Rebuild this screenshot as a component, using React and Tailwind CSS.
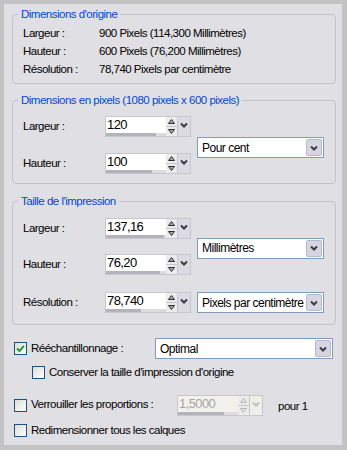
import React from "react";

const FONT = "font-['Liberation_Sans',Arial,sans-serif]";

// small dark "v" used by every drop-down arrow
const Chevron = ({ color = "#3c3c3c" }) => (
  <svg width="8" height="6" viewBox="0 0 8 6">
    <path d="M1 1.5 L4 4.5 L7 1.5" fill="none" stroke={color} strokeWidth="2" />
  </svg>
);

const Tri = ({ up, disabled }) => (
  <svg width="7" height="5" viewBox="0 0 7 5">
    <path
      d={up ? "M0.5 4.5 L3.5 0.5 L6.5 4.5 Z" : "M0.5 0.5 L3.5 4.5 L6.5 0.5 Z"}
      fill={disabled ? "#e4e4e0" : "#a8a8b0"}
      stroke={disabled ? "#b8b8b0" : "#2e2e2e"}
      strokeWidth="1"
    />
  </svg>
);

// numeric field with the slider bar, spin buttons and arrow
const SpinField = ({ value, bar, disabled }) => (
  <div className="flex w-[86px] h-[21px] border border-[#c6c6cc]">
    <div className={`flex flex-col w-[61px] ${disabled ? "bg-[#f2f1ec]" : "bg-white"}`}>
      <div
        className={`flex-1 pl-[1px] text-[13px] tracking-[-0.6px] leading-[16px] ${
          disabled ? "text-[#a6a6a6]" : "text-black"
        }`}
      >
        {value}
      </div>
      <div className="h-[4px] bg-[#dcdce0]">
        <div className="h-full bg-[#b3b3bb]" style={{ width: bar }} />
      </div>
    </div>
    <div className="flex flex-col w-[11px]">
      <div className="flex-1 flex items-center justify-center bg-[#ecebee] border-b border-[#c6c6cc]">
        <Tri up disabled={disabled} />
      </div>
      <div className="flex-1 flex items-center justify-center bg-[#ecebee]">
        <Tri disabled={disabled} />
      </div>
    </div>
    <div
      className={`flex items-start justify-center pt-[5px] w-[13px] border-l border-[#c6c6cc] ${
        disabled ? "bg-[#efeee9]" : "bg-[#dcdbe4]"
      }`}
    >
      <Chevron color={disabled ? "#c2c2bc" : "#3c3c3c"} />
    </div>
  </div>
);

const Select = ({ text, w = "w-[127px]", className = "" }) => (
  <div className={`flex items-center ${w} h-[21px] border border-[#7f9db9] bg-white ${className}`}>
    <span className="flex-1 pl-[4px] text-[12px] tracking-[-0.5px] whitespace-nowrap overflow-hidden">
      {text}
    </span>
    <div className="flex items-center justify-center w-[16px] h-[17px] mr-[1px] rounded-[2px] border border-[#b4b9cc] bg-[#d6d5e1]">
      <Chevron />
    </div>
  </div>
);

const Check = ({ checked }) => (
  <div className="flex items-center justify-center w-[13px] h-[13px] border border-[#1c5180] bg-[linear-gradient(135deg,#dcdcd7,#ffffff)]">
    {checked && (
      <svg width="9" height="9" viewBox="0 0 9 9">
        <path d="M1 4.5 L3.5 7 L8 1.8" fill="none" stroke="#21a121" strokeWidth="2" />
      </svg>
    )}
  </div>
);

const Group = ({ title, className = "", children }) => (
  <fieldset className={`ml-[8px] w-[324px] border border-[#c2c2c8] rounded-[4px] p-0 ${className}`}>
    <legend className="ml-[5px] px-[3px] text-[#0046d5] leading-[15px]">{title}</legend>
    {children}
  </fieldset>
);

const FieldRow = ({ label, value, bar }) => (
  <div className="flex items-center h-[21px]">
    <span className="w-[82px]">{label}</span>
    <SpinField value={value} bar={bar} />
  </div>
);

export default function App() {
  return (
    <div className={`w-[347px] h-[450px] bg-[#c3c3c3] pl-[4px] pt-[4px] ${FONT}`}>
      <div className="w-[338px] h-[441px] bg-[#e0dfe3] flex flex-col text-[11.5px] tracking-[-0.5px] text-black">
        {/* Dimensions d'origine */}
        <Group title="Dimensions d'origine" className="mt-[3px]">
          <div className="pl-[10px] pt-[3px] pb-[4px]">
            {[
              ["Largeur :", "900 Pixels (114,300 Millimètres)"],
              ["Hauteur :", "600 Pixels (76,200 Millimètres)"],
              ["Résolution :", "78,740 Pixels par centimètre"],
            ].map(([l, v]) => (
              <div key={l} className="flex items-center h-[18px]">
                <span className="w-[76px]">{l}</span>
                <span>{v}</span>
              </div>
            ))}
          </div>
        </Group>

        {/* Dimensions en pixels */}
        <Group title="Dimensions en pixels (1080 pixels x 600 pixels)" className="mt-[9px]">
          <div className="flex pl-[10px] pt-[8px] pb-[9px]">
            <div className="flex flex-col gap-[16px]">
              <FieldRow label="Largeur :" value="120" bar={50} />
              <FieldRow label="Hauteur :" value="100" bar={46} />
            </div>
            <Select text="Pour cent" className="ml-[6px] self-center mt-[5px]" />
          </div>
        </Group>

        {/* Taille de l'impression */}
        <Group title="Taille de l'impression" className="mt-[10px]">
          <div className="flex flex-col pl-[10px] pt-[9px] pb-[11px]">
            <div className="flex">
              <div className="flex flex-col gap-[15px]">
                <FieldRow label="Largeur :" value="137,16" bar={58} />
                <FieldRow label="Hauteur :" value="76,20" bar={54} />
              </div>
              <Select text="Millimètres" className="ml-[6px] self-center mt-[3px]" />
            </div>
            <div className="flex items-center mt-[17px]">
              <FieldRow label="Résolution :" value="78,740" bar={35} />
              <Select text="Pixels par centimètre" className="ml-[6px]" />
            </div>
          </div>
        </Group>

        {/* Options */}
        <div className="flex items-center h-[21px] mt-[13px] pl-[10px]">
          <div className="flex items-center gap-[4px] w-[141px]">
            <Check checked />
            <span>Rééchantillonnage :</span>
          </div>
          <Select text="Optimal" w="w-[178px]" />
        </div>
        <div className="flex items-center gap-[4px] h-[13px] mt-[7px] pl-[28px]">
          <Check />
          <span>Conserver la taille d'impression d'origine</span>
        </div>
        <div className="flex items-center h-[22px] mt-[15px] pl-[10px]">
          <div className="flex items-center gap-[4px] w-[163px]">
            <Check />
            <span className="whitespace-nowrap">Verrouiller les proportions :</span>
          </div>
          <SpinField value="1,5000" bar={46} disabled />
          <span className="ml-[15px] mt-[3px]">pour 1</span>
        </div>
        <div className="flex items-center gap-[4px] h-[13px] mt-[8px] pl-[10px]">
          <Check />
          <span>Redimensionner tous les calques</span>
        </div>
      </div>
    </div>
  );
}
